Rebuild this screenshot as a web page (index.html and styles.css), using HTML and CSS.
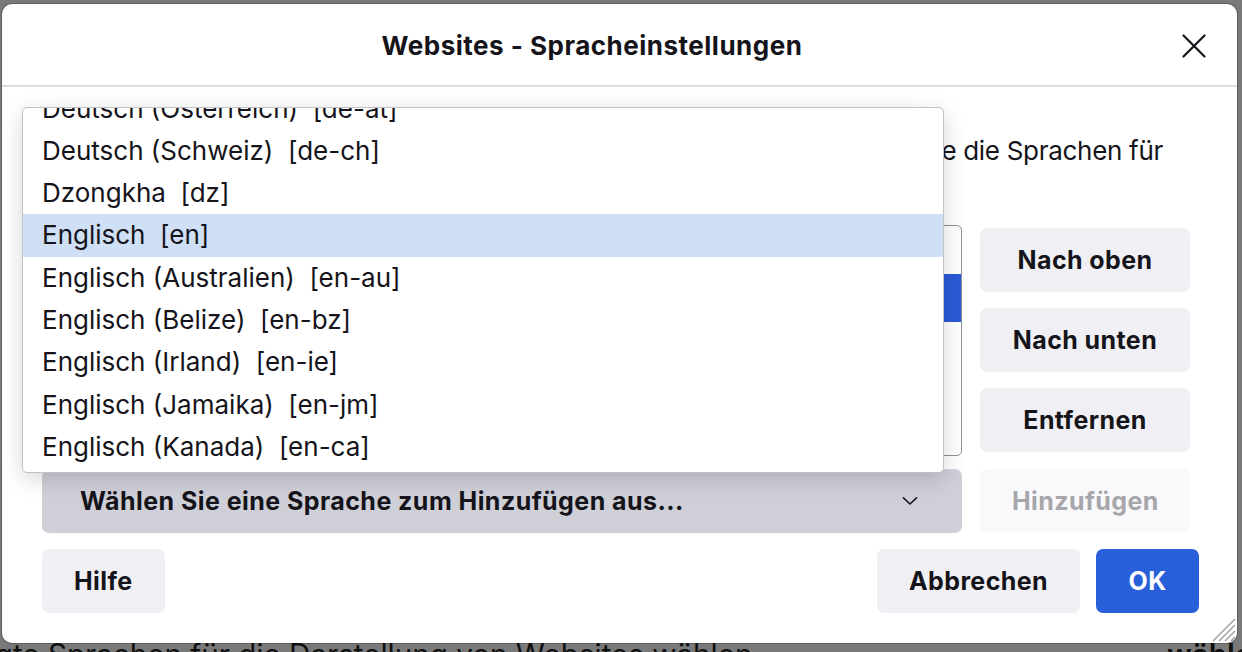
FILE: index.html
```html
<!DOCTYPE html>
<html lang="de">
<head>
<meta charset="utf-8">
<title>Websites - Spracheinstellungen</title>
<link rel="stylesheet" href="styles.css">
</head>
<body>
<div class="backdrop">
  <div class="bg-line">Bevorzugte Sprachen für die Darstellung von Websites wählen</div>
  <div class="bg-btn">wählen…</div>
</div>

<div class="dialog">
  <header class="dlg-head">
    <h1 class="title">Websites - Spracheinstellungen</h1>
    <button class="close" aria-label="Schließen">
      <svg width="24" height="24" viewBox="0 0 24 24"><path d="M1.5 1.5 L22.5 22.5 M22.5 1.5 L1.5 22.5" stroke="#15141a" stroke-width="2.2" fill="none" stroke-linecap="round"/></svg>
    </button>
  </header>

  <main class="dlg-body">
    <p class="desc">Websites werden teilweise in mehr als einer Sprache angeboten. Wählen Sie die Sprachen für<br>die Darstellung der Websites in der Reihenfolge Ihrer Präferenz:</p>
    <div class="grid">
      <div class="listbox">
        <div class="lb-item">Deutsch (Deutschland)  [de-de]</div>
        <div class="lb-item sel">Deutsch  [de]</div>
        <div class="lb-item">Englisch (USA)  [en-us]</div>
        <div class="lb-item">Englisch  [en]</div>
      </div>
      <div class="side">
        <button class="btn">Nach oben</button>
        <button class="btn">Nach unten</button>
        <button class="btn">Entfernen</button>
      </div>
      <div class="select">
        <span>Wählen Sie eine Sprache zum Hinzufügen aus...</span>
        <svg width="16" height="16" viewBox="0 0 16 16"><path d="M1.5 4.8 L8 11 L14.5 4.8" stroke="#15141a" stroke-width="1.6" fill="none" stroke-linejoin="round" stroke-linecap="round"/></svg>
      </div>
      <button class="btn disabled" disabled>Hinzufügen</button>
    </div>
  </main>

  <footer class="dlg-foot">
    <button class="btn">Hilfe</button>
    <span class="spacer"></span>
    <button class="btn">Abbrechen</button>
    <button class="btn primary">OK</button>
  </footer>

  <div class="popup">
    <div class="pop-list">
      <div class="pop-item">Deutsch (Österreich)  [de-at]</div>
      <div class="pop-item">Deutsch (Schweiz)  [de-ch]</div>
      <div class="pop-item">Dzongkha  [dz]</div>
      <div class="pop-item hl">Englisch  [en]</div>
      <div class="pop-item">Englisch (Australien)  [en-au]</div>
      <div class="pop-item">Englisch (Belize)  [en-bz]</div>
      <div class="pop-item">Englisch (Irland)  [en-ie]</div>
      <div class="pop-item">Englisch (Jamaika)  [en-jm]</div>
      <div class="pop-item">Englisch (Kanada)  [en-ca]</div>
      <div class="pop-item">Englisch (Neuseeland)  [en-nz]</div>
    </div>
  </div>

  <svg class="grip" width="26" height="26" viewBox="0 0 26 26">
    <path d="M25 3 L3 25 M25 9 L9 25 M25 15 L15 25 M25 21 L21 25" stroke="#9a9aa0" stroke-width="1.3" fill="none"/>
  </svg>
</div>
</body>
</html>
```

FILE: styles.css
```css
* { box-sizing: border-box; }

html, body {
  margin: 0;
}

body {
  width: 1242px;
  height: 652px;
  overflow: hidden;
  padding: 4px 0 0 2px;
  background: #797979;
  font-family: Inter, "Noto Sans", sans-serif;
  color: #15141a;
  position: relative;
}

.backdrop {
  position: absolute;
  inset: 0;
  z-index: 0;
}

.bg-line,
.bg-btn {
  position: absolute;
  top: 637px;
  font-size: 29.6px;
  line-height: 34px;
  color: #101010;
  white-space: nowrap;
}

.bg-line { left: -120px; }
.bg-btn { left: 1167px; font-weight: 600; }

.dialog {
  position: relative;
  z-index: 1;
  width: 1235px;
  height: 639px;
  background: #fff;
  border-radius: 10px;
  display: flex;
  flex-direction: column;
  box-shadow: 0 0 0 1px rgba(0, 0, 0, 0.2);
}

.dlg-head {
  height: 83px;
  flex: none;
  border-bottom: 2px solid #dcdce1;
  display: flex;
  align-items: center;
  padding-top: 2px;
}

.title {
  flex: 1;
  margin: 0;
  text-align: center;
  font-size: 26px;
  font-weight: 700;
  letter-spacing: 0.5px;
  line-height: 30px;
}

.close {
  width: 24px;
  height: 24px;
  margin-right: 31px;
  padding: 0;
  border: 0;
  background: none;
  display: flex;
}

.dlg-body {
  padding: 43px 0 0 40px;
}

.desc {
  margin: 0 0 11px;
  height: 84px;
  font-size: 26px;
  line-height: 42px;
  letter-spacing: -0.3px;
  white-space: nowrap;
}

.grid {
  display: grid;
  grid-template-columns: 920px 210px;
  grid-template-rows: 231px 64px;
  column-gap: 18px;
  row-gap: 13px;
}

.listbox {
  border: 1px solid #8f8f9d;
  border-radius: 5px;
  overflow: hidden;
}

.lb-item {
  height: 48px;
  line-height: 48px;
  padding-left: 12px;
  font-size: 26px;
  white-space: pre;
}

.lb-item.sel {
  background: #2a5bd6;
  color: #fff;
}

.side {
  display: flex;
  flex-direction: column;
  gap: 16px;
  padding-top: 3px;
}

.btn {
  height: 64px;
  border: 0;
  border-radius: 7px;
  background: #f0f0f4;
  font-family: Inter, "Noto Sans", sans-serif;
  font-size: 25px;
  font-weight: 700;
  letter-spacing: 0.4px;
  color: #15141a;
  padding: 0 32px;
}

.side .btn,
.grid > .btn {
  width: 100%;
}

.btn.disabled {
  background: #f9f9fb;
  color: #a6a6ab;
}

.btn.primary {
  background: #2a5fda;
  color: #fff;
  min-width: 103px;
}

.select {
  display: flex;
  align-items: center;
  justify-content: space-between;
  background: #cfcfd8;
  border-radius: 7px;
  padding: 0 44px 0 38px;
  font-size: 25px;
  font-weight: 700;
  letter-spacing: 0.45px;
}

.dlg-foot {
  display: flex;
  gap: 16px;
  margin-top: 16px;
  padding: 0 38px 0 40px;
}

.spacer { flex: 1; }

.popup {
  position: absolute;
  left: 20px;
  top: 103px;
  width: 922px;
  height: 366px;
  background: #fff;
  border: 1px solid #c2c2c6;
  border-radius: 5px;
  overflow: hidden;
  box-shadow: 0 6px 22px rgba(0, 0, 0, 0.16);
  z-index: 2;
}

.pop-list {
  margin-top: -20.5px;
}

.pop-item {
  height: 42.33px;
  line-height: 42.33px;
  padding-left: 19px;
  font-size: 26px;
  white-space: pre;
}

.pop-item.hl {
  background: #cfdff5;
}

.grip {
  position: absolute;
  right: 1px;
  bottom: 1px;
}
```
